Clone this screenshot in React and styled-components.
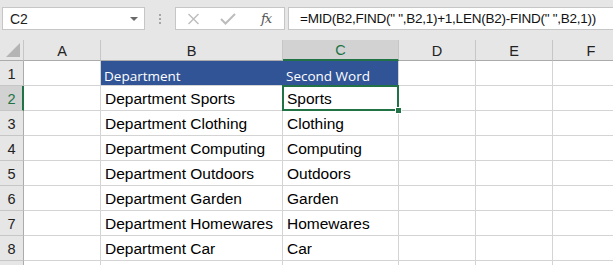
import React from "react";
import styled, { createGlobalStyle, css } from "styled-components";

const Global = createGlobalStyle`
  html, body { margin: 0; padding: 0; background: #e6e6e6; overflow: hidden; }
  body { font-family: "Liberation Sans", Arial, sans-serif; }
`;

const GREEN = "#217346";
const GRID = "#d4d4d4";
const BLUE = "#305496";
const COLS = [77, 182, 116, 77, 77, 77];

const Page = styled.div`
  width: 613px;
  height: 265px;
  overflow: hidden;
  background: #e6e6e6;
  display: flex;
  flex-direction: column;
`;

const Toolbar = styled.div`
  height: 30px;
  display: flex;
  align-items: flex-start;
  padding: 7px 0 0 2px;
  box-sizing: border-box;
  margin-bottom: 10px;
`;

const NameBox = styled.div`
  width: 143px;
  height: 23px;
  box-sizing: border-box;
  background: #fff;
  border: 1px solid #c6c6c6;
  display: flex;
  align-items: center;
  justify-content: space-between;
  padding: 0 6px 0 7px;
  font-size: 14px;
  color: #222;
`;

const Caret = styled.span`
  width: 0;
  height: 0;
  border-left: 4px solid transparent;
  border-right: 4px solid transparent;
  border-top: 4px solid #6a6a6a;
  margin-top: 1px;
`;

const Grip = styled.div`
  width: 30px;
  height: 23px;
  display: flex;
  flex-direction: column;
  align-items: center;
  justify-content: center;
  gap: 2px;
  span {
    width: 2px;
    height: 2px;
    background: #a6a6a6;
  }
`;

const FxButtons = styled.div`
  width: 110px;
  height: 23px;
  box-sizing: border-box;
  background: #fff;
  border: 1px solid #c6c6c6;
  display: flex;
  align-items: center;
  padding-left: 11px;
  gap: 20px;
  margin-right: 3px;
`;

const Fx = styled.span`
  font-family: "DejaVu Serif", "Liberation Serif", serif;
  font-style: italic;
  font-size: 13px;
  color: #555;
  margin-left: 5px;
  letter-spacing: -1px;
`;

const FormulaBox = styled.div`
  flex: 1;
  height: 23px;
  box-sizing: border-box;
  background: #fff;
  border: 1px solid #c6c6c6;
  border-right: none;
  display: flex;
  align-items: center;
  padding-left: 11px;
  font-size: 13.5px;
  letter-spacing: -0.25px;
  color: #111;
  white-space: nowrap;
  overflow: hidden;
`;

const Sheet = styled.div`
  display: grid;
  grid-template-columns: 24px ${COLS.map((c) => c + "px").join(" ")};
  grid-auto-rows: 25px;
  grid-template-rows: 21px;
  background: #fff;
`;

const Corner = styled.div`
  background: #e6e6e6;
  border-right: 1px solid #c6c6c6;
  border-bottom: 1px solid #ababab;
  box-sizing: border-box;
  display: flex;
  align-items: flex-end;
  justify-content: flex-end;
  padding: 0 3px 3px 0;
  svg { display: block; }
`;

const ColHead = styled.div`
  background: ${(p) => (p.$active ? "#d2d2d2" : "#e6e6e6")};
  border-right: 1px solid #c6c6c6;
  border-bottom: ${(p) => (p.$active ? `2px solid ${GREEN}` : "1px solid #ababab")};
  box-sizing: border-box;
  display: flex;
  align-items: center;
  justify-content: center;
  font-size: 14.5px;
  padding-top: 1px;
  color: ${(p) => (p.$active ? GREEN : "#222")};
`;

const RowHead = styled.div`
  background: ${(p) => (p.$active ? "#d2d2d2" : "#e6e6e6")};
  border-right: ${(p) => (p.$active ? `2px solid ${GREEN}` : "1px solid #ababab")};
  border-bottom: 1px solid #c6c6c6;
  box-sizing: border-box;
  display: flex;
  align-items: flex-end;
  justify-content: center;
  padding-bottom: 2px;
  padding-left: ${(p) => (p.$active ? "1px" : "0")};
  font-size: 14.5px;
  line-height: 18px;
  color: ${(p) => (p.$active ? GREEN : "#222")};
`;

const Cell = styled.div`
  position: relative;
  box-sizing: border-box;
  border-right: 1px solid ${GRID};
  border-bottom: 1px solid ${GRID};
  display: flex;
  align-items: flex-end;
  padding: 0 0 2px 4px;
  font-size: 15.5px;
  line-height: 18px;
  color: #000;
  white-space: nowrap;
  ${(p) =>
    p.$head &&
    css`
      background: ${BLUE};
      border-right-color: ${p.$last ? GRID : BLUE};
      color: #fff;
      font-family: "Open Sans", "Noto Sans", sans-serif;
      font-size: 13.5px;
      padding: 0 0 0 3px;
    `}
  ${(p) =>
    p.$selected &&
    css`
      &::after {
        content: "";
        position: absolute;
        left: -1px;
        top: -1px;
        right: -1px;
        bottom: -1px;
        border: 2px solid ${GREEN};
        pointer-events: none;
      }
      &::before {
        content: "";
        position: absolute;
        right: -4px;
        bottom: -4px;
        width: 5px;
        height: 5px;
        background: ${GREEN};
        border: 1px solid #fff;
        z-index: 2;
      }
    `}
`;

const data = [
  ["Department Sports", "Sports"],
  ["Department Clothing", "Clothing"],
  ["Department Computing", "Computing"],
  ["Department Outdoors", "Outdoors"],
  ["Department Garden", "Garden"],
  ["Department Homewares", "Homewares"],
  ["Department Car", "Car"],
];

const letters = ["A", "B", "C", "D", "E", "F"];

function CrossIcon() {
  return (
    <svg width="13" height="12" viewBox="0 0 13 12">
      <path d="M1.5 1 L11.5 11 M11.5 1 L1.5 11" stroke="#bcbcbc" strokeWidth="1.4" fill="none" />
    </svg>
  );
}

function CheckIcon() {
  return (
    <svg width="16" height="12" viewBox="0 0 16 12">
      <path d="M1 6 L5.5 10.5 L15 1" stroke="#bcbcbc" strokeWidth="2" fill="none" />
    </svg>
  );
}

export default function App() {
  return (
    <Page>
      <Global />
      <Toolbar>
        <NameBox>
          C2
          <Caret />
        </NameBox>
        <Grip>
          <span />
          <span />
          <span />
        </Grip>
        <FxButtons>
          <CrossIcon />
          <CheckIcon />
          <Fx>fx</Fx>
        </FxButtons>
        <FormulaBox>=MID(B2,FIND(" ",B2,1)+1,LEN(B2)-FIND(" ",B2,1))</FormulaBox>
      </Toolbar>
      <Sheet>
        <Corner>
          <svg width="14" height="14" viewBox="0 0 14 14">
            <polygon points="14,0 14,14 0,14" fill="#b4b4b4" />
          </svg>
        </Corner>
        {letters.map((l) => (
          <ColHead key={l} $active={l === "C"}>
            {l}
          </ColHead>
        ))}
        <RowHead>1</RowHead>
        <Cell />
        <Cell $head>Department</Cell>
        <Cell $head $last>
          Second Word
        </Cell>
        <Cell />
        <Cell />
        <Cell />
        {data.map(([b, c], i) => (
          <React.Fragment key={i}>
            <RowHead $active={i === 0}>{i + 2}</RowHead>
            <Cell />
            <Cell>{b}</Cell>
            <Cell $selected={i === 0}>{c}</Cell>
            <Cell />
            <Cell />
            <Cell />
          </React.Fragment>
        ))}
        <RowHead />
        <Cell />
        <Cell />
        <Cell />
        <Cell />
        <Cell />
        <Cell />
      </Sheet>
    </Page>
  );
}
